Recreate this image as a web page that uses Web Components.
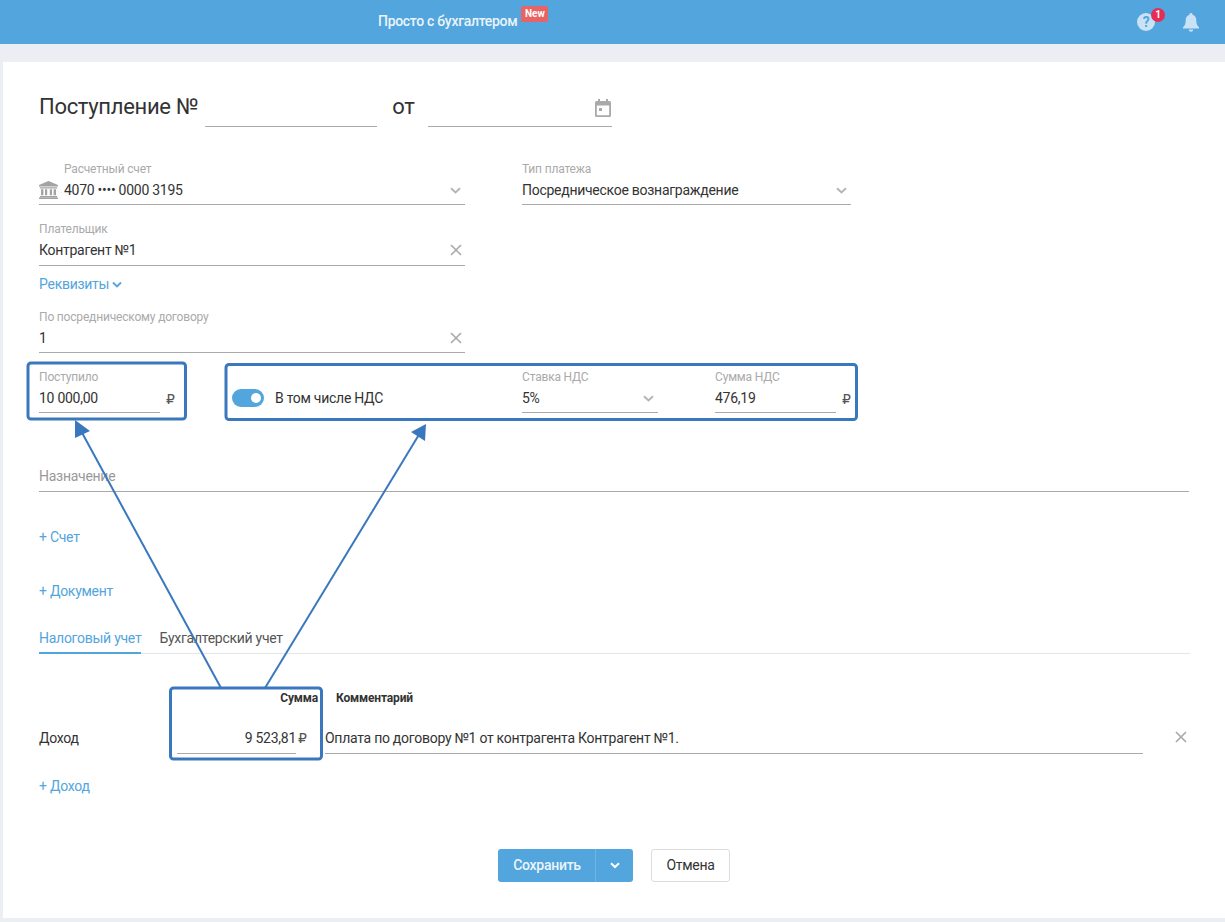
<!DOCTYPE html>
<html lang="ru">
<head>
<meta charset="utf-8">
<title>Поступление</title>
<style>
  html, body { margin: 0; padding: 0; }
  body {
    background: #ebeff3;
    font-family: Roboto, "Liberation Sans", sans-serif;
    font-size: 14px;
    letter-spacing: -0.27px;
    color: #333;
    position: relative;
    height: 922px;
    overflow: hidden;
  }
</style>
</head>
<body>

<app-header></app-header>

<doc-card>
  <doc-title></doc-title>

  <form-row top="28">
    <form-field label="Расчетный счет" value="4070 •••• 0000 3195" icon="chevron" width="426" bank></form-field>
    <form-field label="Тип платежа" value="Посредническое вознаграждение" icon="chevron" width="329" offset="57"></form-field>
  </form-row>
  <form-row top="10">
    <form-field label="Плательщик" value="Контрагент №1" icon="close" width="426" height="51"></form-field>
  </form-row>
  <link-row top="9">Реквизиты <svg width="10" height="8" viewBox="0 0 10 8"><path d="M1 1.500l4 4 4-4" fill="none" stroke="currentColor" stroke-width="1.800"/></svg></link-row>
  <form-row top="10">
    <form-field label="По посредническому договору" value="1" icon="close" width="426"></form-field>
  </form-row>
  <form-row top="10">
    <form-field label="Поступило" value="10 000,00" width="121" suffix></form-field>
    <vat-toggle>В том числе НДС</vat-toggle>
    <form-field label="Ставка НДС" value="5%" icon="chevron" width="136" offset="90"></form-field>
    <form-field label="Сумма НДС" value="476,19" width="121" offset="57" suffix></form-field>
  </form-row>
  <form-row top="29">
    <form-field placeholder="Назначение" width="1150"></form-field>
  </form-row>
  <link-row top="36">+ Счет</link-row>
  <link-row top="36">+ Документ</link-row>
  <tab-bar></tab-bar>
  <income-table></income-table>
  <link-row top="23">+ Доход</link-row>
  <form-actions></form-actions>
</doc-card>

<callout-layer></callout-layer>

<script>
  const icons = {
    chevron: `<svg width="11" height="7" viewBox="0 0 11 7"><path d="M1 1.200L5.500 5.400 10 1.200" fill="none" stroke="#b5b5b5" stroke-width="2"/></svg>`,
    close: `<svg width="12" height="12" viewBox="0 0 12 12" style="margin-right:-1px"><path d="M1 1l10 10M11 1L1 11" fill="none" stroke="#aaa" stroke-width="1.700"/></svg>`,
    bank: `<svg width="19" height="18" viewBox="0 0 19 18"><path fill="#a3a3a3" d="M9.500 0L19 4v1.500H0V4zM.8 6.300h17.400v1.200H.8zM2 8.300h2.400v6H2zM6 8.300h2.200v6H6zM10.800 8.300H13v6h-2.200zM14.600 8.300H17v6h-2.400zM1 15h17v1.200H1zM0 16.600h19V18H0z"/></svg>`,
    calendar: `<svg width="16" height="18" viewBox="0 0 16 18"><path fill="#a9a9a9" d="M3 0h2v2h6V0h2v2h1.500A1.500 1.500 0 0 1 16 3.500v13a1.500 1.500 0 0 1-1.500 1.500h-13A1.500 1.500 0 0 1 0 16.500v-13A1.500 1.500 0 0 1 1.500 2H3zM1.800 6.500v9.700h12.400V6.500zM4 9h3v3H4z"/></svg>`
  };

  class AppHeader extends HTMLElement {
    connectedCallback() {
      this.attachShadow({ mode: 'open' }).innerHTML = `
        <style>
          :host { display: flex; align-items: center; height: 44px; background: #52a5dd; color: #fff; }
          .brand { margin-left: 378px; font-size: 14px; font-weight: 500; color: #eaf4fb; letter-spacing: -0.3px; }
          .new {
            display: inline-block; position: relative; top: -9px; margin-left: 4px; width: 27px; text-align: center;
            background: #e86464; border-radius: 2px; font-size: 10px; line-height: 16px; font-weight: 700; color: #fff; letter-spacing: 0;
          }
          .tools { margin-left: auto; margin-right: 26px; display: flex; gap: 28px; align-items: center; }
          .help { position: relative; width: 18px; height: 18px; border-radius: 50%; background: #c9e2f5;
            color: #52a5dd; font-size: 14px; font-weight: 700; line-height: 18px; text-align: center; }
          .count { position: absolute; left: 14px; top: -5px; width: 14px; height: 14px; border-radius: 50%;
            background: #e62e54; color: #fff; font-size: 10px; font-weight: 700; line-height: 14px; text-align: center; }
          svg { display: block; }
        </style>
        <span class="brand">Просто с бухгалтером<span class="new">New</span></span>
        <div class="tools">
          <div class="help">?<span class="count">1</span></div>
          <svg width="16" height="19" viewBox="0 0 16 19"><path fill="#c9e2f5" d="M8 0a1.500 1.500 0 0 1 1.500 1.700C12 2.400 13.300 4.500 13.300 7.200c0 3.500.9 5.300 2.700 7V15.500H0v-1.300c1.800-1.700 2.700-3.500 2.700-7 0-2.700 1.300-4.800 3.800-5.500A1.500 1.500 0 0 1 8 0zM5.800 16.500h4.400a2.200 2.200 0 0 1-4.400 0z"/></svg>
        </div>`;
    }
  }

  class DocCard extends HTMLElement {
    connectedCallback() {
      this.attachShadow({ mode: 'open' }).innerHTML = `
        <style>
          :host { display: block; box-sizing: border-box; margin: 18px 0 0 3px; width: 1222px; height: 856px;
            padding: 28px 36px 0 36px; background: #fff; }
        </style>
        <slot></slot>`;
    }
  }

  class DocTitle extends HTMLElement {
    connectedCallback() {
      this.attachShadow({ mode: 'open' }).innerHTML = `
        <style>
          :host { display: flex; align-items: flex-start; height: 37px; font-size: 22px; line-height: 34px; color: #333; letter-spacing: -0.3px; }
          .line { height: 36px; border-bottom: 1px solid #aaa; }
          .num { width: 172px; margin: 0 15px 0 7px; }
          .date { width: 184px; margin-left: 14px; display: flex; justify-content: flex-end; align-items: center; }
          svg { display: block; margin: 0 1px 0 0; }
        </style>
        <span>Поступление №</span><div class="line num"></div>
        <span>от</span><div class="line date">${icons.calendar}</div>`;
    }
  }

  class FormRow extends HTMLElement {
    connectedCallback() {
      this.attachShadow({ mode: 'open' }).innerHTML = `
        <style>
          :host { display: flex; align-items: flex-end; margin-top: ${this.getAttribute('top') || 0}px; }
        </style>
        <slot></slot>`;
    }
  }

  class FormField extends HTMLElement {
    connectedCallback() {
      const width = this.getAttribute('width');
      const height = this.getAttribute('height') || 50;
      const offset = this.getAttribute('offset') || 0;
      const label = this.getAttribute('label');
      const placeholder = this.getAttribute('placeholder');
      const value = this.getAttribute('value') || '';
      const icon = this.getAttribute('icon');
      const bank = this.hasAttribute('bank');
      const suffix = this.hasAttribute('suffix');
      this.attachShadow({ mode: 'open' }).innerHTML = `
        <style>
          :host { display: flex; align-items: flex-end; margin-left: ${offset}px; flex: none; }
          .box { position: relative; box-sizing: border-box; width: ${width}px; height: ${height}px; border-bottom: 1px solid #aaa; }
          .label { position: absolute; left: ${bank ? 25 : 0}px; top: 7px; font-size: 12px; line-height: 14px; color: #aaa; white-space: nowrap; letter-spacing: -0.18px; }
          .value { position: absolute; left: ${bank ? 25 : 0}px; top: 26px; font-size: 14px; line-height: 18px; color: #333; white-space: nowrap; }
          .placeholder { color: #999; top: 25px; }
          .icon { position: absolute; right: 4px; top: 26px; height: 18px; display: flex; align-items: center; }
          .bank { position: absolute; left: 0; top: 26px; }
          .suffix { width: 15px; flex: none; box-sizing: border-box; height: 23px; padding-bottom: 5px; line-height: 18px; text-align: right; color: #555; font-family: "DejaVu Sans", sans-serif; font-size: 14px; letter-spacing: 0; }
          svg { display: block; }
        </style>
        <div class="box">
          ${bank ? `<span class="bank">${icons.bank}</span>` : ''}
          ${label ? `<span class="label">${label}</span>` : ''}
          <span class="value ${placeholder ? 'placeholder' : ''}">${placeholder || value}</span>
          ${icon ? `<span class="icon">${icons[icon]}</span>` : ''}
        </div>
        ${suffix ? `<span class="suffix">₽</span>` : ''}`;
    }
  }

  class VatToggle extends HTMLElement {
    connectedCallback() {
      this.attachShadow({ mode: 'open' }).innerHTML = `
        <style>
          :host { display: flex; align-items: center; flex: none; width: 200px; height: 18px; margin: 0 0 6px 57px; color: #333; white-space: nowrap; }
          .track { position: relative; width: 32px; height: 18px; border-radius: 9px; background: #52a5dd; margin-right: 11px; flex: none; }
          .knob { position: absolute; right: 3px; top: 4px; width: 10px; height: 10px; border-radius: 50%; background: #fff; }
        </style>
        <span class="track"><span class="knob"></span></span><slot></slot>`;
    }
  }

  class LinkRow extends HTMLElement {
    connectedCallback() {
      this.attachShadow({ mode: 'open' }).innerHTML = `
        <style>
          :host { display: block; margin-top: ${this.getAttribute('top') || 0}px; height: 18px;
            line-height: 18px; color: #52a5dd; }
        </style>
        <slot></slot>`;
    }
  }

  class TabBar extends HTMLElement {
    connectedCallback() {
      this.attachShadow({ mode: 'open' }).innerHTML = `
        <style>
          :host { display: flex; gap: 18px; margin-top: 29px; width: 1151px; height: 25px; box-sizing: border-box; border-bottom: 1px solid #e4e7ea; }
          .tab { box-sizing: border-box; height: 25px; line-height: 18px; color: #555; }
          .active { color: #52a5dd; border-bottom: 2px solid #52a5dd; }
        </style>
        <span class="tab active">Налоговый учет</span>
        <span class="tab">Бухгалтерский учет</span>`;
    }
  }

  class IncomeTable extends HTMLElement {
    connectedCallback() {
      this.attachShadow({ mode: 'open' }).innerHTML = `
        <style>
          :host { display: grid; grid-template-columns: 138px 141px 18px 807px 1fr; grid-template-rows: 18px 47px; margin-top: 35px; width: 1151px; }
          .head { font-size: 12px; line-height: 18px; font-weight: 700; color: #333; letter-spacing: -0.15px; }
          .sum-head { text-align: right; grid-column: 2; }
          .comment-head { grid-column: 4; }
          .name { grid-column: 1; align-self: end; line-height: 18px; padding-bottom: 7px; }
          .sum { grid-column: 2; align-self: end; position: relative; box-sizing: border-box; width: 119px; height: 30px; padding-top: 5px; border-bottom: 1px solid #aaa; line-height: 18px; text-align: right; white-space: nowrap; }
          .rub { position: absolute; right: -11px; top: 5px; font-family: "DejaVu Sans", sans-serif; font-size: 14px; color: #555; letter-spacing: 0; }
          .comment { grid-column: 3 / 5; margin-left: 7px; align-self: end; height: 30px; box-sizing: border-box; border-bottom: 1px solid #aaa; line-height: 18px; padding-top: 5px; white-space: nowrap; }
          .x { grid-column: 5; justify-self: end; align-self: end; padding: 0 3px 11px 0; }
          .x svg { display: block; margin: 0 !important; }
        </style>
        <span></span><span class="head sum-head">Сумма</span><span></span><span class="head comment-head">Комментарий</span><span></span>
        <span class="name">Доход</span>
        <div class="sum">9 523,81<span class="rub">₽</span></div>
        <div class="comment">Оплата по договору №1 от контрагента Контрагент №1.</div>
        <span class="x">${icons.close}</span>`;
    }
  }

  class FormActions extends HTMLElement {
    connectedCallback() {
      this.attachShadow({ mode: 'open' }).innerHTML = `
        <style>
          :host { display: flex; gap: 18px; margin: 54px 0 0 459px; }
          .save { display: flex; height: 33px; border-radius: 3px; background: #52a5dd; color: #eaf4fb; line-height: 33px; font-weight: 500; }
          .save span { padding: 0 14px 0 15px; width: 68px; text-align: center; }
          .more { width: 37px; border-left: 1px solid #6fb5e4; display: flex; align-items: center; justify-content: center; }
          .cancel { box-sizing: border-box; width: 79px; height: 33px; border: 1px solid #ddd; border-radius: 3px; line-height: 31px; text-align: center; color: #333; }
          svg { display: block; }
        </style>
        <div class="save"><span>Сохранить</span><div class="more"><svg width="10" height="7" viewBox="0 0 10 7"><path d="M1 1.200l4 3.800 4-3.800" fill="none" stroke="#fff" stroke-width="2"/></svg></div></div>
        <div class="cancel">Отмена</div>`;
    }
  }

  // рамки и стрелки поверх формы
  class CalloutLayer extends HTMLElement {
    connectedCallback() {
      this.attachShadow({ mode: 'open' }).innerHTML = `
        <style>
          :host { position: absolute; left: 0; top: 0; width: 1225px; height: 922px; pointer-events: none; }
          svg { display: block; }
          rect { fill: none; stroke: #3a78bd; stroke-width: 3; }
          line { stroke: #3a78bd; stroke-width: 2; }
          polygon { fill: #3a78bd; }
        </style>
        <svg width="1225" height="922" viewBox="0 0 1225 922">
          <rect x="28" y="363" width="157.500" height="56" rx="3"/>
          <rect x="226" y="364.500" width="630.500" height="55" rx="3"/>
          <rect x="170.500" y="688" width="151" height="71" rx="3"/>
          <line x1="221" y1="688" x2="80" y2="429"/>
          <polygon points="75,420 90,431 75,438"/>
          <line x1="265" y1="688" x2="420" y2="433"/>
          <polygon points="426,424 425,441 411,432"/>
        </svg>`;
    }
  }

  customElements.define('app-header', AppHeader);
  customElements.define('doc-card', DocCard);
  customElements.define('doc-title', DocTitle);
  customElements.define('form-row', FormRow);
  customElements.define('form-field', FormField);
  customElements.define('vat-toggle', VatToggle);
  customElements.define('link-row', LinkRow);
  customElements.define('tab-bar', TabBar);
  customElements.define('income-table', IncomeTable);
  customElements.define('form-actions', FormActions);
  customElements.define('callout-layer', CalloutLayer);
</script>
</body>
</html>
